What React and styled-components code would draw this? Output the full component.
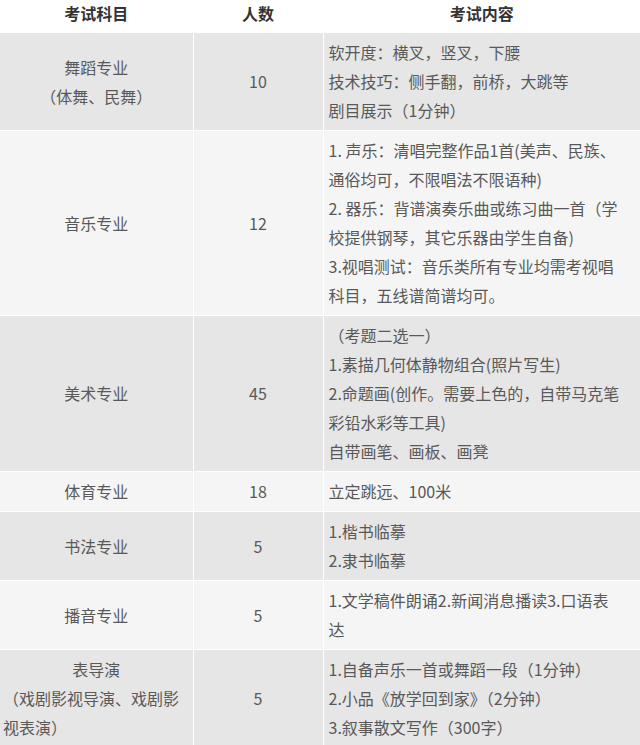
import styled, { createGlobalStyle } from "styled-components";

const GlobalStyle = createGlobalStyle`
    body {
        margin: 0;
        background: #fff;
        font-family: "Noto Sans CJK SC", "Noto Sans", sans-serif;
    }
`

const Table = styled.table`
    width: 640px;
    table-layout: fixed;
    border-collapse: collapse;
    border-style: hidden;
    font-size: 16px;
    color: #595959;
`

const HeadCell = styled.th`
    padding: 0 5px 6px;
    vertical-align: top;
    line-height: 26px;
    font-weight: bold;
    color: #333;
    background: #fff;
    border: 1px solid #fff;
`

const Row = styled.tr`
    background: ${(p) => (p.$odd ? "#e6e6e6" : "#f5f5f5")};
`

const Cell = styled.td`
    padding: 5px ${(p) => (p.$content ? "5px" : "3px")};
    line-height: 29px;
    text-align: ${(p) => (p.$content ? "left" : "center")};
    vertical-align: middle;
    border: 1px solid #fff;
    overflow: hidden;
`

const Line = styled.div`
    white-space: nowrap;
    text-align: ${(p) => p.$align || "inherit"};
`

const rows = [
    {
        subject: [{ t: "舞蹈专业" }, { t: "（体舞、民舞）" }],
        count: "10",
        content: ["软开度：横叉，竖叉，下腰", "技术技巧：侧手翻，前桥，大跳等", "剧目展示（1分钟）"],
    },
    {
        subject: [{ t: "音乐专业" }],
        count: "12",
        content: [
            "1. 声乐：清唱完整作品1首(美声、民族、",
            "通俗均可，不限唱法不限语种)",
            "2. 器乐：背谱演奏乐曲或练习曲一首（学",
            "校提供钢琴，其它乐器由学生自备)",
            "3.视唱测试：音乐类所有专业均需考视唱",
            "科目，五线谱简谱均可。",
        ],
    },
    {
        subject: [{ t: "美术专业" }],
        count: "45",
        content: [
            "（考题二选一）",
            "1.素描几何体静物组合(照片写生)",
            "2.命题画(创作。需要上色的，自带马克笔",
            "彩铅水彩等工具)",
            "自带画笔、画板、画凳",
        ],
    },
    {
        subject: [{ t: "体育专业" }],
        count: "18",
        content: ["立定跳远、100米"],
    },
    {
        subject: [{ t: "书法专业" }],
        count: "5",
        content: ["1.楷书临摹", "2.隶书临摹"],
    },
    {
        subject: [{ t: "播音专业" }],
        count: "5",
        content: ["1.文学稿件朗诵2.新闻消息播读3.口语表", "达"],
    },
    {
        subject: [
            { t: "表导演" },
            { t: "（戏剧影视导演、戏剧影", align: "left" },
            { t: "视表演）", align: "left" },
        ],
        count: "5",
        content: ["1.自备声乐一首或舞蹈一段（1分钟）", "2.小品《放学回到家》（2分钟）", "3.叙事散文写作（300字）"],
    },
]

export default function App() {
    return (
        <>
            <GlobalStyle />
            <Table>
                <colgroup>
                    <col style={{ width: "193px" }} />
                    <col style={{ width: "130px" }} />
                    <col />
                </colgroup>
                <thead>
                    <tr>
                        <HeadCell>考试科目</HeadCell>
                        <HeadCell>人数</HeadCell>
                        <HeadCell>考试内容</HeadCell>
                    </tr>
                </thead>
                <tbody>
                    {rows.map((r, i) => (
                        <Row key={i} $odd={i % 2 === 0}>
                            <Cell>
                                {r.subject.map((s, j) => (
                                    <Line key={j} $align={s.align}>{s.t}</Line>
                                ))}
                            </Cell>
                            <Cell>{r.count}</Cell>
                            <Cell $content>
                                {r.content.map((c, j) => (
                                    <Line key={j}>{c}</Line>
                                ))}
                            </Cell>
                        </Row>
                    ))}
                </tbody>
            </Table>
        </>
    )
}
